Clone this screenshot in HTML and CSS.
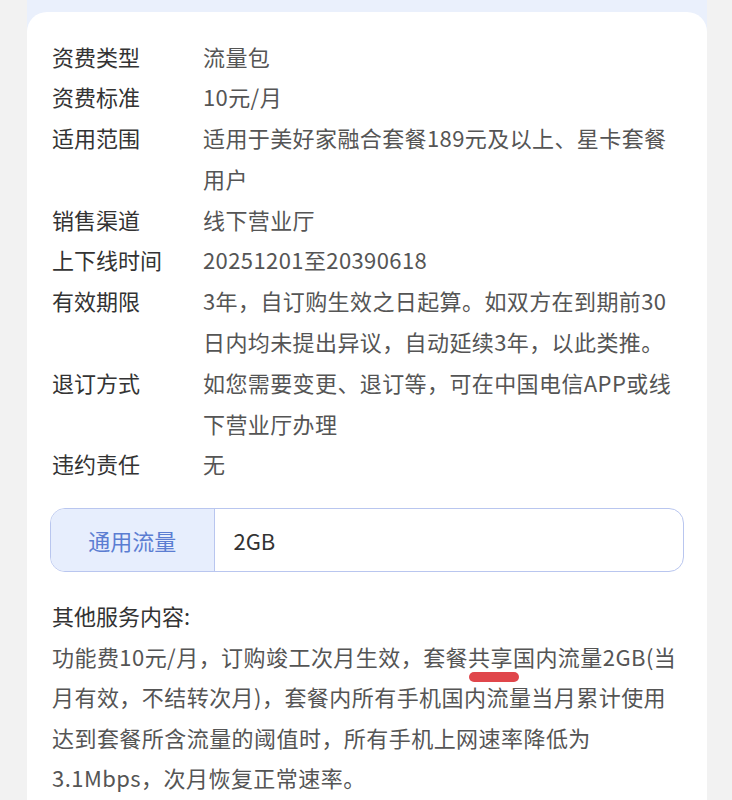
FILE: index.html
```html
<!DOCTYPE html>
<html lang="zh-CN">
<head>
<meta charset="utf-8">
<title>资费详情</title>
<link rel="stylesheet" href="styles.css">
</head>
<body>
<div class="page">
  <div class="card">
    <div class="info">
      <div class="row"><div class="label">资费类型</div><div class="value">流量包</div></div>
      <div class="row"><div class="label">资费标准</div><div class="value">10元/月</div></div>
      <div class="row"><div class="label">适用范围</div><div class="value">适用于美好家融合套餐189元及以上、星卡套餐<br>用户</div></div>
      <div class="row"><div class="label">销售渠道</div><div class="value">线下营业厅</div></div>
      <div class="row"><div class="label">上下线时间</div><div class="value">20251201至20390618</div></div>
      <div class="row"><div class="label">有效期限</div><div class="value">3年，自订购生效之日起算。如双方在到期前30<br>日内均未提出异议，自动延续3年，以此类推。</div></div>
      <div class="row"><div class="label">退订方式</div><div class="value">如您需要变更、退订等，可在中国电信APP或线<br>下营业厅办理</div></div>
      <div class="row"><div class="label">违约责任</div><div class="value">无</div></div>
    </div>
    <div class="quota">
      <div class="quota-name">通用流量</div>
      <div class="quota-value">2GB</div>
    </div>
    <div class="other">
      <div class="other-title">其他服务内容:</div>
      <p class="other-text">功能费10元/月，订购竣工次月生效，套餐<span class="mark">共享</span>国内流量2GB(当<br>月有效，不结转次月)，套餐内所有手机国内流量当月累计使用<br>达到套餐所含流量的阈值时，所有手机上网速率降低为<br>3.1Mbps，次月恢复正常速率。</p>
    </div>
  </div>
</div>
</body>
</html>
```

FILE: styles.css
```css
html, body {
  margin: 0;
  padding: 0;
}
body {
  background: #f2f2f2;
  font-family: "Noto Sans CJK SC", "Noto Sans", sans-serif;
  font-size: 22px;
  color: #333;
  overflow: hidden;
}
.page {
  margin-left: 27px;
  width: 680px;
  padding-top: 12px;
  background: linear-gradient(#eaf0fc 0, #eaf0fc 34px, transparent 34px);
}
.card {
  box-sizing: border-box;
  min-height: calc(100vh - 12px);
  background: #fff;
  border-radius: 20px 20px 0 0;
  padding: 23.5px 23px 0;
}
.info {
  display: flex;
  flex-direction: column;
  padding-left: 2px;
}
.row {
  display: grid;
  grid-template-columns: 151px 1fr;
  line-height: 40.8px;
}
.label {
  color: #333;
  white-space: nowrap;
}
.value {
  color: #555;
  white-space: nowrap;
  letter-spacing: 0.4px;
}
.quota {
  margin-top: 23.5px;
  display: flex;
  height: 62px;
  border: 1.5px solid #b9c6ef;
  border-radius: 15px;
  overflow: hidden;
}
.quota-name {
  width: 162.5px;
  background: #e7eefd;
  border-right: 1.5px solid #b9c6ef;
  color: #5b7dd2;
  display: flex;
  align-items: center;
  justify-content: center;
}
.quota-value {
  display: flex;
  align-items: center;
  padding-left: 19px;
  color: #333;
}
.other {
  margin-top: 23.5px;
  padding-left: 2px;
  line-height: 40.5px;
}
.other-title {
  color: #333;
}
.other-text {
  margin: 0;
  color: #555;
  white-space: nowrap;
  letter-spacing: 0.45px;
}
.mark {
  position: relative;
}
.mark::after {
  content: "";
  position: absolute;
  left: 1px;
  width: 50px;
  top: 32px;
  height: 10px;
  border-radius: 5px;
  background: #e0464b;
}
```
